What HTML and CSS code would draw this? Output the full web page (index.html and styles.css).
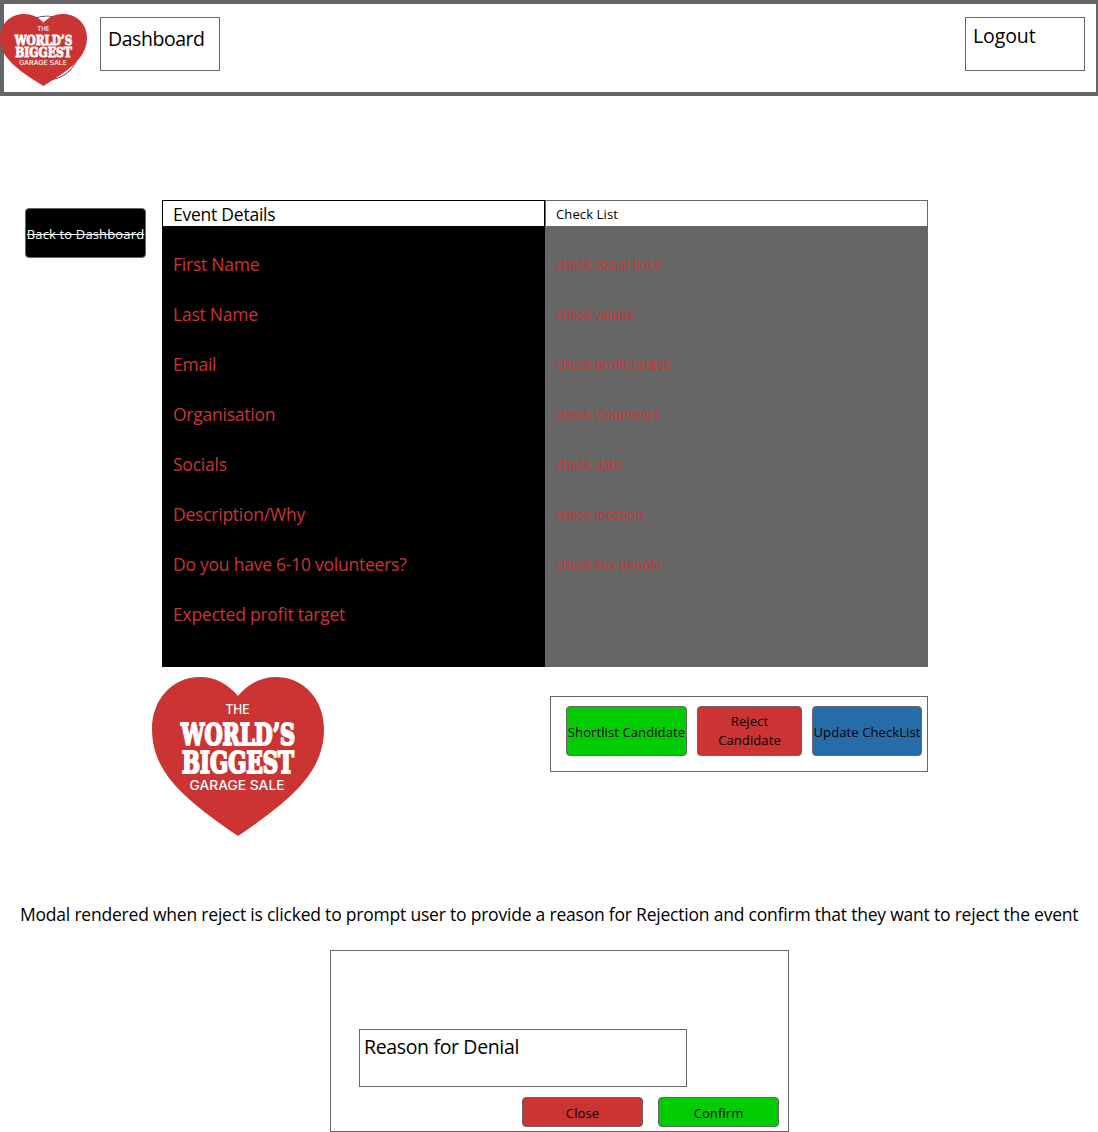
FILE: index.html
```html
<!DOCTYPE html>
<html lang="en">
<head>
<meta charset="utf-8">
<title>Event Details</title>
<link rel="stylesheet" href="styles.css">
</head>
<body>
<header class="topbar">
  <div class="brand">
    <svg class="logo" width="87" height="72" viewBox="0 0 172 159" preserveAspectRatio="none">
      <path fill="#cc3433" d="M86 19C76 7 63 0 48 0C20 0 0 23 0 52C0 94 30 121 86 159C142 121 172 94 172 52C172 23 152 0 124 0C109 0 96 7 86 19Z"/>
      <text class="logo-sans" x="73.5" y="37" textLength="24" lengthAdjust="spacingAndGlyphs">THE</text>
      <text class="logo-slab" x="29" y="67.500" textLength="114" lengthAdjust="spacingAndGlyphs">WORLD’S</text>
      <text class="logo-slab" x="30" y="96" textLength="112" lengthAdjust="spacingAndGlyphs">BIGGEST</text>
      <text class="logo-sans" x="37.5" y="113" textLength="95" lengthAdjust="spacingAndGlyphs">GARAGE SALE</text>
    </svg>
  </div>
  <a class="nav nav-dashboard">Dashboard</a>
  <a class="nav nav-logout">Logout</a>
</header>
<main>
  <section class="event">
    <button class="btn back"><span>Back to Dashboard</span></button>
    <div class="panel details">
      <h2>Event Details</h2>
      <ul>
        <li>First Name</li><li>Last Name</li><li>Email</li><li>Organisation</li>
        <li>Socials</li><li>Description/Why</li><li>Do you have 6-10 volunteers?</li><li>Expected profit target</li>
      </ul>
    </div>
    <div class="panel checks">
      <h2>Check List</h2>
      <ul>
        <li>check social links</li><li>check values</li><li>check profit target</li><li>check volunteers</li>
        <li>check date</li><li>check location</li><li>check key people</li>
      </ul>
    </div>
  </section>
  <section class="lower">
    <svg class="logo" width="172" height="159" viewBox="0 0 172 159">
      <path fill="#cc3433" d="M86 19C76 7 63 0 48 0C20 0 0 23 0 52C0 94 30 121 86 159C142 121 172 94 172 52C172 23 152 0 124 0C109 0 96 7 86 19Z"/>
      <text class="logo-sans" x="73.5" y="37" textLength="24" lengthAdjust="spacingAndGlyphs">THE</text>
      <text class="logo-slab" x="29" y="67.500" textLength="114" lengthAdjust="spacingAndGlyphs">WORLD’S</text>
      <text class="logo-slab" x="30" y="96" textLength="112" lengthAdjust="spacingAndGlyphs">BIGGEST</text>
      <text class="logo-sans" x="37.5" y="113" textLength="95" lengthAdjust="spacingAndGlyphs">GARAGE SALE</text>
    </svg>
    <div class="actions">
      <button class="btn green shortlist">Shortlist Candidate</button>
      <button class="btn red reject">Reject Candidate</button>
      <button class="btn blue update">Update CheckList</button>
    </div>
  </section>
  <p class="note">Modal rendered when reject is clicked to prompt user to provide a reason for Rejection and confirm that they want to reject the event</p>
  <section class="modal">
    <div class="reason">Reason for Denial</div>
    <div class="modal-actions">
      <button class="btn red">Close</button>
      <button class="btn green">Confirm</button>
    </div>
  </section>
</main>
</body>
</html>
```
FILE: styles.css
```css
* { box-sizing: border-box; }
body {
  margin: 0;
  background: #fff;
  color: #000;
  font-family: "Segoe UI", "Open Sans", "Noto Sans", sans-serif;
  font-size: 13px;
}
.logo { display: block; flex: none; fill: #fff; }
.logo-sans { font: 500 12.500px Inter, sans-serif; }
.logo-slab {
  font: bold 30px "DejaVu Serif", serif;
  stroke: #fff;
  stroke-width: 2.200px;
}
.topbar {
  display: flex;
  height: 96px;
  border: 4px solid #666;
  border-right-width: 2px;
}
.brand {
  flex: none;
  width: 87px;
  height: 72px;
  margin: 10px 0 0 -4px;
  background: radial-gradient(circle at 47px 34px, transparent 31.200px, #666 31.700px, #666 32.200px, transparent 32.700px);
}
.nav {
  width: 120px;
  height: 54px;
  margin-top: 13px;
  padding: 0 7px;
  border: 1px solid #666;
  font-size: 19.500px;
  line-height: 26px;
}
.nav-dashboard { margin-left: 13px; padding-top: 8px; letter-spacing: -.45px; }
.nav-logout { margin: 13px 11px 0 auto; padding-top: 5px; letter-spacing: -.1px; }
.event {
  display: grid;
  grid-template-columns: 137px 383px 383px;
  height: 467px;
  margin: 104px 0 0 25px;
}
.btn {
  display: flex;
  align-items: center;
  justify-content: center;
  height: 50px;
  padding: 2px 0 0;
  border: 1px solid #666;
  border-radius: 4px;
  color: #000;
  font: inherit;
  line-height: 19px;
  letter-spacing: .1px;
}
.back {
  width: 121px;
  margin-top: 8px;
  background: #000;
  color: #fff;
  white-space: nowrap;
  text-decoration: line-through;
  letter-spacing: .15px;
}
.details { background: #000; font-size: 17.500px; letter-spacing: -.24px; }
.checks { background: #666; letter-spacing: .12px; }
.panel h2 {
  height: 26px;
  margin: 0;
  padding-left: 10px;
  background: #fff;
  border: 1px solid #666;
  border-bottom: 0;
  font-size: inherit;
  font-weight: 400;
  line-height: 27px;
}
.details h2 { border-color: #000; line-height: 26px; }
.panel ul { margin: 0; padding: 14px 0 0 11px; list-style: none; color: #cc3433; }
.panel li { height: 50px; line-height: 49px; }
.lower { display: flex; height: 169px; padding: 10px 0 0 152px; }
.actions {
  display: flex;
  gap: 10px;
  width: 378px;
  height: 76px;
  margin: 19px 0 0 226px;
  padding: 9px 0 0 15px;
  border: 1px solid #666;
}
.green { background: #00cc00; }
.red { background: #cc3433; }
.blue { background: #266ca9; }
.shortlist { width: 121px; white-space: nowrap; }
.reject { width: 105px; padding: 0 15px; }
.update { width: 110px; white-space: nowrap; }
.note {
  margin: 66px 0 0 20px;
  font-size: 17.500px;
  line-height: 24px;
  letter-spacing: -.21px;
  white-space: nowrap;
}
.modal {
  width: 459px;
  height: 182px;
  margin: 24px 0 0 330px;
  padding: 78px 9px 0 28px;
  border: 1px solid #666;
}
.reason {
  width: 328px;
  height: 58px;
  padding: 4px;
  border: 1px solid #666;
  font-size: 19.500px;
  line-height: 26px;
  letter-spacing: -.35px;
}
.modal-actions { display: flex; justify-content: flex-end; gap: 15px; margin-top: 10px; }
.modal-actions .btn { width: 121px; height: 30px; }
```
